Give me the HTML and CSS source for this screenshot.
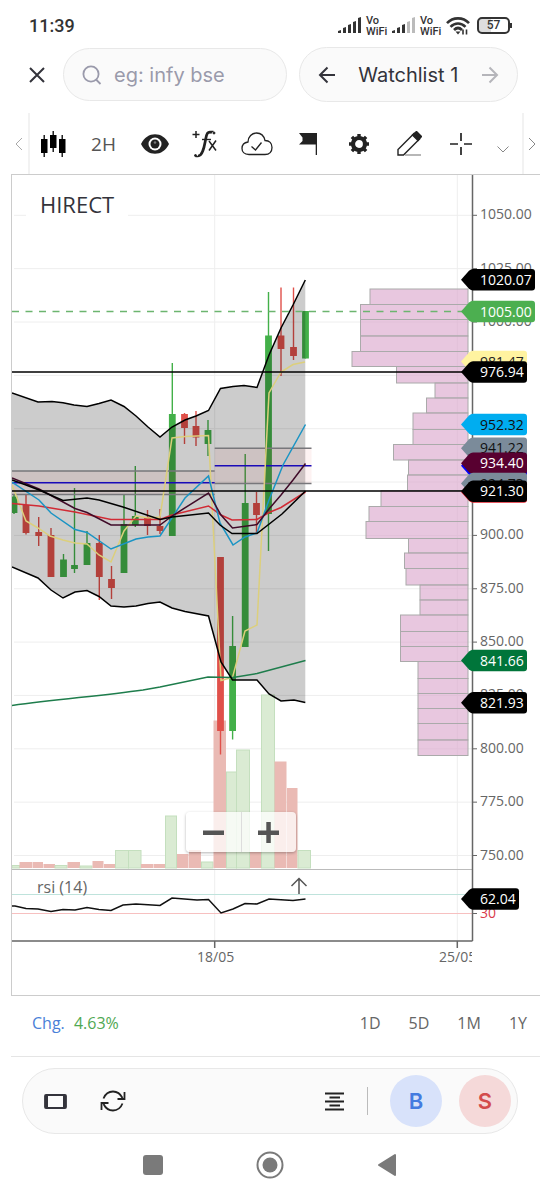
FILE: index.html
```html
<!DOCTYPE html>
<html lang="en">
<head>
    <meta charset="UTF-8">
    <meta name="viewport" content="width=device-width, initial-scale=1.0">
    <title>HIRECT chart</title>
    <link rel="stylesheet" href="styles.css">
</head>
<body>
    <div class="status-bar">
        <span class="clock">11:39</span>
        <div class="status-icons">
            <svg width="24" height="17" viewBox="0 0 24 17" fill="#333"><path d="M0 14l3-1v3H0zM5 11l3-1v6H5zM10 8l3-1v9h-3zM15 5l3-1v12h-3zM20 1l3-1v16h-3z"/></svg>
            <span class="vowifi">Vo<br>WiFi</span>
            <svg width="24" height="17" viewBox="0 0 24 17" fill="#333"><path d="M0 14l3-1v3H0zM5 11l3-1v6H5zM10 8l3-1v9h-3z"/><path fill="#bbb" d="M15 5l3-1v12h-3zM20 1l3-1v16h-3z"/></svg>
            <span class="vowifi">Vo<br>WiFi</span>
            <svg width="24" height="18" viewBox="0 0 24 18" fill="none" stroke="#333" stroke-width="2.6"><path d="M1 6.2C7-.2 17-.2 23 6.200M4.500 9.800C9 5.300 15 5.300 19.500 9.800M8 13c2.500-2.500 5.500-2.500 8 0"/><path d="M9.500 14.500h5L12 17.500z" fill="#333" stroke="none"/><path d="M17 12.500v5M20.500 12.500v5" stroke-width="1.600"/></svg>
            <div class="battery"><span>57</span></div>
        </div>
    </div>

    <header class="header">
        <button class="close-btn" aria-label="Close">
            <svg width="16" height="16" viewBox="0 0 16 16" fill="none" stroke="#33333b" stroke-width="2"><path d="M1 1l14 14M15 1L1 15"/></svg>
        </button>
        <label class="search">
            <svg width="20" height="20" viewBox="0 0 20 20" fill="none" stroke="#9a9aab" stroke-width="1.8"><circle cx="9" cy="9" r="7.600"/><path d="M14 14.500l4.500 4.500"/></svg>
            <input type="text" placeholder="eg: infy bse" aria-label="Search">
        </label>
        <div class="watchlist">
            <button aria-label="Previous">
                <svg width="18" height="18" viewBox="0 0 18 18" fill="none" stroke="#33333b" stroke-width="2"><path d="M17 9H2M9.500 1.500L2 9l7.500 7.500"/></svg>
            </button>
            <span>Watchlist 1</span>
            <button aria-label="Next">
                <svg width="18" height="18" viewBox="0 0 18 18" fill="none" stroke="#b5b5ba" stroke-width="2"><path d="M1 9h15M8.500 1.500L16 9l-7.500 7.500"/></svg>
            </button>
        </div>
    </header>

    <div class="toolbar">
        <button class="scroll-btn left" aria-label="Scroll left">
            <svg width="8" height="12" viewBox="0 0 8 12" fill="none" stroke="#aaa"><path d="M7 0L1 6l6 6"/></svg>
        </button>
        <div class="tools">
            <button aria-label="Chart type">
                <svg width="26" height="26" viewBox="0 0 26 26"><path d="M1 8h6.500v14H1zM10 4h6.500v13H10zM19 8h6.500v14H19z"/><path d="M4.200 4v22M13.200 0v21M22.200 4v22" stroke="#000" stroke-width="1.300"/></svg>
            </button>
            <button class="interval">2H</button>
            <button aria-label="Display">
                <svg width="28" height="20" viewBox="0 0 28 20"><path fill="#222" d="M0 10C6-3 22-3 28 10 22 23 6 23 0 10z"/><circle cx="14" cy="10" r="6.500" fill="#fff"/><circle cx="14" cy="10" r="4.500" fill="#222"/><circle cx="14" cy="8.500" r="1.300" fill="#777"/></svg>
            </button>
            <button aria-label="Studies">
                <svg width="28" height="28" viewBox="0 0 28 28" fill="none" stroke="#222"><path stroke-width="1.500" d="M4 1v7M.500 4.500h7"/><path stroke-width="1.400" d="M10 9.500h9"/><path stroke-width="2.700" d="M20 2.500C15 .500 14.500 5 13.500 10S11 26 6 26"/><circle cx="22" cy="3" r="1" fill="#222"/><circle cx="3.500" cy="25.500" r="1" fill="#222"/><path stroke-width="1.500" d="M3.500 26.500H6M18.500 1.500h3M17 11l7 9.500M24 10.500l-7 10"/></svg>
            </button>
            <button aria-label="Saved views">
                <svg width="32" height="24" viewBox="0 0 32 24" fill="none" stroke="#222" stroke-width="1.300"><path d="M8 22.500C3 22.500 1 19.500 1 16.500c0-3.500 2.500-6 6-6.500C7 4.500 11 1 15.500 1S23 4 24 8.500c4.500 0 7 3 7 7s-2.500 7-7 7z"/><path d="M10.500 14.500l4 3.500 6-7.500"/></svg>
            </button>
            <button aria-label="Events">
                <svg width="18" height="22" viewBox="0 0 18 22"><path fill="#222" d="M0 0h18v22h-1.300V11.500H0L3.500 8V4.500z"/></svg>
            </button>
            <button aria-label="Settings">
                <svg width="20" height="20" viewBox="0 0 20 20"><circle cx="10" cy="10" r="6" fill="none" stroke="#222" stroke-width="4.200"/><path stroke="#222" stroke-width="3.400" d="M10 0v4M10 16v4M0 10h4M16 10h4M2.900 2.900l2.800 2.800M14.300 14.300l2.800 2.800M2.900 17.100l2.800-2.800M14.300 5.700l2.800-2.800"/></svg>
            </button>
            <button aria-label="Draw">
                <svg width="25" height="25" viewBox="0 0 25 25" fill="none" stroke="#222" stroke-width="1.400"><path d="M17 2.500l5.500 5.500L6.500 24H1v-5.500z"/><path fill="#222" d="M15.500 4l4-3.500 5 5L21 9.500z"/><path stroke="#999" d="M8 24h16"/></svg>
            </button>
            <button aria-label="Crosshair">
                <svg width="24" height="24" viewBox="0 0 24 24" fill="none" stroke="#222" stroke-width="1.700"><path d="M12 1v8M12 15v8M1 12h8M15 12h8"/></svg>
            </button>
            <button class="more" aria-label="More tools">
                <svg width="12" height="7" viewBox="0 0 12 7" fill="none" stroke="#888"><path d="M.500.500L6 6l5.500-5.500"/></svg>
            </button>
        </div>
        <button class="scroll-btn" aria-label="Scroll right">
            <svg width="8" height="12" viewBox="0 0 8 12" fill="none" stroke="#888"><path d="M1 0l6 6-6 6"/></svg>
        </button>
    </div>

    <main class="chart">
        <svg class="plot" viewBox="12 175 528 820">
            <defs>
                <clipPath id="date-clip"><rect x="12" y="941" width="460" height="54"/></clipPath>
            </defs>
            <g id="grid"></g>
            <g id="volume"></g>
            <g id="profile"></g>
            <g id="candles"></g>

            <!-- bollinger band -->
            <path class="band" d="M12 393L38 402 52 401.500 63 402.700 74 405 87 406.500 99 403.500 111 400 124 406.500 136 416 148 427 160 437 172 427 185 420 196 416 208.500 410.500 220.500 388.500 233 386.500 244 385.500 257 387.500 269 355 281 328 293 305 305.300 280V702.500L294 700 281 701 269 694 257 680H232.500L221 662 208.500 616 185 611.500 172 608 160 602 148 603.500 136 606 124 607 111 606 99 596.500 87 590.500 75 592 63 598 51 590 38 578 12 567z"/>
            <!-- pivot zones -->
            <rect class="pivot" x="12" y="471" width="202.700" height="24"/>
            <rect class="pivot" x="214.700" y="448" width="96.800" height="35.500"/>
            <path class="gray" d="M12 471H214.700M12 494.500H214.700M214.700 448.300H311.500M214.700 483.500H311.500"/>
            <path class="blue" d="M12 482.800H214.700M214.700 465.800H311.500"/>

            <g class="series">
                <path stroke="#dccf7c" d="M12 485L26 521 38 528 50 536 63 540 75 543 87 544 99 555 111 562 124 531 136 516 148 518 160 517 172 438 185 436.500 208.500 435.500 221 680.500 232.500 677.500 245 631 257 625 269 393 281 372 293 364.500 305 362"/>
                <path stroke="#d12b35" d="M12 503.500L39 506 75 512 111 519.500H160L172 515 208.500 506 221 515 232 520 257 519.500 269 512.500 281 507.500 305.500 492"/>
                <path stroke="#1a94c4" d="M12 482L39 500 51 513 75 529.500 87 532.500 111 549 136 539 148 537 160 536 185 498 208.500 476 220 523 233 545 245 537 257 533 269 500 283 465 305.500 424.500"/>
                <path stroke="#3f0a28" d="M12 478L39 489 75 508.500 87 512.500 111 525H160L172 516 208.500 493 221 515 232.500 528 257 524.500 269 509 281 495 293 480 305.500 463.500"/>
                <path stroke="#000" d="M12 480L26 485 39 490 63 500.500 87 498 99 500 123 507 160 519.500 172 517 208.500 513 220 525 232 533.500H257L282 514 305.500 491"/>
                <path stroke="#1e7d4c" d="M12 705.500C60 699 100 696 143 690L160 687 208 677 233 677.500 257 673.500 305.500 660.500"/>
                <path stroke="#000" d="M12 393L38 402 52 401.500 63 402.700 74 405 87 406.500 99 403.500 111 400 124 406.500 136 416 148 427 160 437 172 427 185 420 196 416 208.500 410.500 220.500 388.500 233 386.500 244 385.500 257 387.500 269 355 281 328 293 305 305.300 280"/>
                <path stroke="#000" d="M12 567L38 578 51 590 63 598 75 592 87 590.500 99 596.500 111 606 124 607 136 606 148 603.500 160 602 172 608 185 611.500 208.500 616 221 662 232.500 680H257L269 694 281 701 294 700 305.300 702.500"/>
                <!-- drawn levels -->
                <path stroke="#000" d="M12 372H468M12 491H468"/>
                <path class="last-price" d="M12 311.500H462"/>
            </g>

            <!-- rsi pane -->
            <path stroke="#bbb" d="M12 869.500H472"/>
            <path stroke="#bfe3dc" d="M12 894.500H472"/>
            <path stroke="#f7c0c0" d="M12 913.500H472"/>
            <text class="study-name" x="37" y="893">rsi (14)</text>
            <path fill="none" stroke="#555" stroke-width="1.500" d="M299 894V878.500M291.500 886L299 878.500 306.500 886"/>
            <path fill="none" stroke="#111" stroke-width="1.500" d="M12 906H15L26 908.500 38 909 51 911.500 63 909.500 75 910 87 907.500 99 909.500 111 910.500 123 905 136 904 160 905.500 172 898 197 900 208.500 899.500 221 913 233 909 245 903.500 257 904 269 899 293 900.500 305.500 899"/>

            <!-- axes -->
            <path fill="none" stroke="#666" stroke-width="1.500" d="M472.500 175V941M12 941H472.500M214.700 941V948M457.300 941V948"/>
            <g class="dates" clip-path="url(#date-clip)">
                <text x="197" y="962">18/05</text>
                <text x="439" y="962">25/05</text>
            </g>
            <g id="labels"></g>
            <g id="tags"></g>
        </svg>
        <h1 class="symbol">HIRECT</h1>
        <div class="zoom-box">
            <button aria-label="Zoom out"><svg width="21" height="21" viewBox="0 0 21 21"><path fill="#555" d="M0 8.500h21V13H0z"/></svg></button>
            <button aria-label="Zoom in"><svg width="21" height="21" viewBox="0 0 21 21"><path fill="#555" d="M0 8.500h21V13H0zM8.300 0h4.500v21H8.300z"/></svg></button>
        </div>
    </main>

    <div class="ranges">
        <div class="change">Chg. <span>4.63%</span></div>
        <button>1D</button>
        <button>5D</button>
        <button>1M</button>
        <button>1Y</button>
    </div>

    <footer class="actions">
        <button class="icon-btn" aria-label="Rotate">
            <svg width="23" height="15" viewBox="0 0 23 15" fill="none" stroke="#33333b"><rect x="1" y="1" width="21" height="13" rx="1" stroke-width="1.800"/><path stroke-width="3" d="M2.500 1v13M20.500 1v13"/></svg>
        </button>
        <button class="icon-btn" aria-label="Refresh">
            <svg width="26" height="22" viewBox="0 0 26 22" fill="none" stroke="#222" stroke-width="1.800"><path d="M3.500 8.500C5.500 3.500 9 1.500 13 1.500c4.500 0 7.500 2.500 9.500 6.500M24.500 2v7h-7M22.500 13.500c-2 5-5.500 7-9.500 7-4.500 0-7.500-2.500-9.500-6.500M1.500 20v-7h7"/></svg>
        </button>
        <button class="depth" aria-label="Market depth">
            <svg width="20" height="19" viewBox="0 0 20 19" stroke="#222" stroke-width="2"><path d="M0 1.500h19M4.500 5.500h10.500M0 9.500h19M4.500 13.500h10.500M0 17.500h19"/></svg>
        </button>
        <button class="trade buy">B</button>
        <button class="trade sell">S</button>
    </footer>

    <nav class="system-nav">
        <button aria-label="Recents"><svg width="20" height="20" viewBox="0 0 20 20"><rect width="20" height="20" rx="3" fill="#7a7a7a"/></svg></button>
        <button aria-label="Home"><svg width="28" height="28" viewBox="0 0 28 28"><circle cx="14" cy="14" r="12.500" fill="none" stroke="#7a7a7a" stroke-width="2"/><circle cx="14" cy="14" r="7.500" fill="#7a7a7a"/></svg></button>
        <button aria-label="Back"><svg width="20" height="24" viewBox="0 0 20 24"><path d="M18 2v20L2 12z" fill="#7a7a7a" stroke="#7a7a7a" stroke-width="2" stroke-linejoin="round"/></svg></button>
    </nav>

    <script src="chart.js"></script>
</body>
</html>
```
FILE: styles.css
```css
* {
    box-sizing: border-box;
}
body {
    margin: 0;
    background-color: #fff;
    color: #33333b;
    font-family: "Open Sans", sans-serif;
}
button {
    display: flex;
    justify-content: center;
    align-items: center;
    padding: 0;
    border: none;
    background: none;
    color: inherit;
    font: inherit;
    cursor: pointer;
}
svg {
    display: block;
    flex-shrink: 0;
}
.status-bar {
    display: flex;
    justify-content: space-between;
    align-items: center;
    height: 47px;
    padding: 4px 30px 0 29px;
    color: #333;
    font-family: Roboto, sans-serif;
}
.clock {
    font-size: 18px;
    font-weight: 500;
}
.status-icons {
    display: flex;
    align-items: center;
    gap: 4px;
}
.vowifi {
    width: 22px;
    font-size: 11px;
    font-weight: 500;
    line-height: 11px;
}
.battery {
    position: relative;
    width: 33px;
    height: 17px;
    margin-left: 3px;
    border: 2px solid #333;
    border-radius: 5px;
    background: linear-gradient(to right, #ddd 40%, #fff 40%);
    font-size: 12px;
    font-weight: 500;
    line-height: 13px;
    text-align: center;
}
.battery::after {
    content: "";
    position: absolute;
    top: 4px;
    right: -4px;
    width: 2px;
    height: 5px;
    background-color: #333;
}
.header {
    display: flex;
    align-items: center;
    height: 55px;
    padding: 0 22px 0 29px;
    font-family: Inter, sans-serif;
    font-size: 20px;
}
.close-btn {
    width: 16px;
    height: 40px;
    margin-right: 18px;
}
.search {
    display: flex;
    flex: 1 1 44px;
    align-items: center;
    gap: 12px;
    min-width: 0;
    height: 53px;
    margin-right: 12px;
    padding: 0 18px;
    border: 1px solid #e8e8e8;
    border-radius: 27px;
    background-color: #fafafa;
}
.search input {
    width: 100%;
    min-width: 0;
    padding: 0;
    border: none;
    outline: none;
    background: none;
    font: inherit;
}
.search input::placeholder {
    color: #9a9aab;
}
.watchlist {
    display: flex;
    flex: 1 1 40px;
    justify-content: space-between;
    align-items: center;
    height: 55px;
    padding: 0 18px;
    border: 1px solid #e8e8e8;
    border-radius: 28px;
    background-color: #fafafa;
    white-space: nowrap;
}
.toolbar {
    display: flex;
    height: 61px;
    margin-top: 11px;
}
.scroll-btn {
    width: 16px;
}
.scroll-btn.left {
    width: 28px;
    padding-left: 10px;
}
.tools {
    display: flex;
    flex: 1;
    padding-right: 3px;
    border: solid #f2f2f2;
    border-width: 0 2px;
}
.tools button {
    flex: 51 1 0;
    min-width: 0;
}
.tools button:first-child {
    margin-left: -3px;
}
.tools .more {
    flex: 33 1 0;
    padding-top: 12px;
}
.interval {
    color: #555;
    font-size: 19px;
}
.chart {
    position: relative;
    margin-left: 11px;
    border: solid #ccc;
    border-width: 1px 0 1px 1px;
}
.plot {
    width: 100%;
    height: auto;
}
.symbol {
    position: absolute;
    top: 13px;
    left: 14px;
    margin: 0;
    padding: 0 14px;
    background-color: #fff;
    font-size: 22px;
    font-weight: 400;
    line-height: 32px;
}
.grid {
    stroke: #eee;
    stroke-width: 1;
}
.band {
    fill: #000;
    fill-opacity: 0.2;
}
.pivot {
    fill: #e04040;
    fill-opacity: 0.07;
}
.gray {
    stroke: #77777b;
    stroke-width: 1.5;
}
.blue {
    stroke: #1a0ab8;
    stroke-width: 1.5;
}
.series path {
    fill: none;
    stroke-width: 1.5;
}
.series .last-price {
    stroke: #6cb56f;
    stroke-dasharray: 7 6.5;
}
.up {
    fill: #43b049;
    stroke: #43b049;
}
.down {
    fill: #e0504a;
    stroke: #e0504a;
}
.vol-up {
    fill: #daebd3;
    stroke: #c4dfbe;
}
.vol-down {
    fill: #eabab4;
}
.profile {
    fill: #dba6cc;
    fill-opacity: 0.63;
    stroke: #aaa;
}
.plot text {
    font-size: 14px;
}
.dates text,
.labels text {
    fill: #666;
}
.labels .oversold {
    fill: #d93a4a;
}
.plot .study-name {
    fill: #666;
    font-size: 16px;
}
.zoom-box {
    position: absolute;
    bottom: 143px;
    left: 33%;
    display: flex;
    width: 110px;
    height: 40px;
    border-radius: 4px;
    background-color: rgba(255, 255, 255, 0.75);
    box-shadow: 0 1px 3px rgba(0, 0, 0, 0.3);
}
.zoom-box button {
    flex: 1;
}
.zoom-box button + button {
    border-left: 1px solid #ddd;
}
.ranges {
    display: flex;
    align-items: center;
    gap: 28px;
    height: 61px;
    margin-left: 11px;
    padding: 0 13px 6px 21px;
    border-bottom: 1px solid #e5e5e5;
    color: #666;
    font-size: 16px;
}
.change {
    margin-right: auto;
    color: #4a7fd8;
}
.change span {
    margin-left: 5px;
    color: #4fa852;
}
.actions {
    display: flex;
    align-items: center;
    height: 66px;
    margin: 11px 22px 0;
    padding: 0 6px 0 15px;
    border: 1px solid #e8e8e8;
    border-radius: 33px;
    background-color: #fafafa;
}
.icon-btn {
    width: 34px;
    height: 34px;
    margin-right: 24px;
}
.depth {
    height: 28px;
    margin-right: 22px;
    margin-left: auto;
    padding-right: 22px;
    border-right: 1px solid #bbb;
}
.trade {
    width: 52px;
    height: 52px;
    border-radius: 50%;
    font-family: Inter, sans-serif;
    font-size: 22px;
    font-weight: 600;
}
.buy {
    margin-right: 17px;
    background-color: #d8e2fa;
    color: #447be0;
}
.sell {
    background-color: #f5d9d9;
    color: #d34c4c;
}
.system-nav {
    display: flex;
    justify-content: center;
    align-items: center;
    gap: 93px;
    height: 61px;
}
```
FILE: chart.js
```js
const NS = 'http://www.w3.org/2000/svg';

function add(parent, tag, attrs, text) {
    const el = document.createElementNS(NS, tag);
    for (const key in attrs) el.setAttribute(key, attrs[key]);
    if (text) el.textContent = text;
    document.getElementById(parent).appendChild(el);
}

// y of the 1050 level, and the distance between two levels
const TOP = 215.3;
const STEP = 53.35;

// Grid
for (let i = 0; i < 13; i++) {
    add('grid', 'path', { class: 'grid', d: `M14 ${TOP + i * STEP}H472` });
}
[214.7, 457.3].forEach(x => add('grid', 'path', { class: 'grid', d: `M${x} 175V941` }));

// Price labels
document.getElementById('labels').setAttribute('class', 'labels');
for (let i = 0; i < 13; i++) {
    if (i >= 3 && i <= 5) continue;
    const y = TOP + i * STEP;
    add('labels', 'path', { stroke: '#666', d: `M473 ${y}h4` });
    add('labels', 'text', { x: 480, y: y + 4 }, (1050 - i * 25).toFixed(2));
}
add('labels', 'path', { stroke: '#666', d: 'M473 913.5h4' });
add('labels', 'text', { x: 480, y: 918, class: 'oversold' }, '30');

// Candles: x, high, low, body top, body bottom, direction
const candles = [
    [14, 495, 514, 496.5, 513, 1], [26, 494, 534.5, 505, 533, 0], [38.7, 517, 546, 532, 536, 0],
    [51, 528, 577, 535, 577, 0], [63.5, 554, 577, 559.5, 577, 1], [74.5, 488, 573, 565, 569, 1],
    [87, 531, 565, 543, 565, 1], [99.3, 535, 600, 543, 577, 0], [111.5, 566, 599, 579, 588, 0],
    [124, 494, 573, 524, 573, 1], [135.3, 466, 527, 516, 525, 1], [147.5, 510, 535, 517, 526, 0],
    [160, 509, 534, 526, 531, 0], [172.3, 363, 536, 414, 536, 1], [184.5, 413, 444, 414, 428, 0],
    [196, 411, 446, 426, 437.5, 0], [208, 420, 456, 430, 444, 1], [220.5, 557, 754.5, 557, 731, 0],
    [232.6, 616, 739.5, 646, 731, 1], [245.2, 454, 647, 503, 647, 1], [256.5, 492, 533, 503, 515, 0],
    [268.5, 292, 551, 335.5, 514, 1], [281, 287.5, 376, 335.5, 349, 0], [293.5, 287.5, 360, 347, 356, 0],
    [305.5, 311, 358.5, 311, 358.5, 1]
];
candles.forEach(([x, high, low, top, bottom, up]) => {
    const left = Math.max(12, x - 3.4);
    add('candles', 'path', {
        class: up ? 'up' : 'down',
        'stroke-width': 1.4,
        d: `M${x} ${high}V${low}`
    });
    add('candles', 'rect', {
        class: up ? 'up' : 'down',
        'stroke-width': 0,
        x: left, y: top, width: x + 3.4 - left, height: bottom - top
    });
});

// Volume: left, right, top, direction
const volume = [
    [12, 19.5, 865.5, 1], [19.5, 32, 862, 0], [32.5, 43, 862, 0], [43.5, 55, 864, 0], [55, 67, 865.5, 1],
    [67.5, 80, 862, 0], [80, 92, 866, 1], [92.5, 103.5, 861, 0], [104, 115, 864, 0], [115.5, 128.5, 850.5, 1],
    [128.5, 141, 850.5, 1], [141, 153, 864, 0], [153.5, 165, 864, 0], [165.5, 176.5, 816, 1],
    [177, 188.5, 854, 0], [189, 201, 850, 0], [201.5, 213, 862, 1], [213.5, 226, 720.5, 0],
    [226.5, 236.5, 772, 1], [236.5, 249.5, 750, 1], [250, 261, 852, 0], [261.5, 274.5, 695, 1],
    [274.5, 286.5, 761.5, 0], [287, 297.5, 788, 0], [298, 310.5, 850.5, 1]
];
volume.forEach(([left, right, top, up]) => {
    add('volume', 'rect', {
        class: up ? 'vol-up' : 'vol-down',
        x: left, y: top, width: right - left, height: 868 - top
    });
});

// Volume profile rows
const rows = [289, 304.5, 319.5, 336, 351.5, 366.5, 383, 398, 413, 429.5, 444.5, 460, 475, 490.5, 506.5,
    521.5, 538.5, 553, 568.5, 585, 600, 615, 631.5, 646.5, 661.5, 678.5, 693.5, 708.5, 723.5, 740, 755.5];
const lefts = [370, 360.5, 360.5, 360.5, 352, 396.5, 435, 426.5, 413, 413, 393.5, 408.5, 407.5, 381, 369,
    366, 408.5, 404.5, 406, 420, 420, 400.5, 400.5, 400.5, 418, 418, 418, 418, 418, 418];
lefts.forEach((left, i) => {
    add('profile', 'rect', {
        class: 'profile',
        x: left, y: rows[i], width: 468 - left, height: rows[i + 1] - rows[i]
    });
});

// Price tags: y, text, background, text colour
const tags = [
    [279.7, '1020.07', '#000', '#fff'],
    [311.5, '1005.00', '#4caf50', '#fff'],
    [361.5, '981.47', '#fff3a0', '#222'],
    [372, '976.94', '#000', '#fff'],
    [424.5, '952.32', '#00adf0', '#111'],
    [448.3, '941.22', '#7b8b9a', '#111'],
    [465.8, '', '#00f', '#fff'],
    [463.3, '934.40', '#580030', '#fff'],
    [483.5, '924.73', '#7b8b9a', '#111'],
    [492, '', '#e0202c', '#fff'],
    [491.2, '921.30', '#000', '#fff'],
    [660.5, '841.66', '#00753a', '#fff'],
    [702.7, '821.93', '#000', '#fff'],
    [899, '62.04', '#000', '#fff']
];
tags.forEach(([y, text, background, color]) => {
    const right = { 7: 535, 6: 527, 5: 519, 0: 527 }[text.length];
    add('tags', 'path', {
        fill: background,
        d: `M461 ${y}L469 ${y - 9}Q471 ${y - 10.7} 473 ${y - 10.7}H${right - 3}q3 0 3 3V${y + 7.7}q0 3 -3 3H473Q471 ${y + 10.7} 469 ${y + 9}z`
    });
    if (text) add('tags', 'text', { x: 480, y: y + 5, fill: color }, text);
});
```
